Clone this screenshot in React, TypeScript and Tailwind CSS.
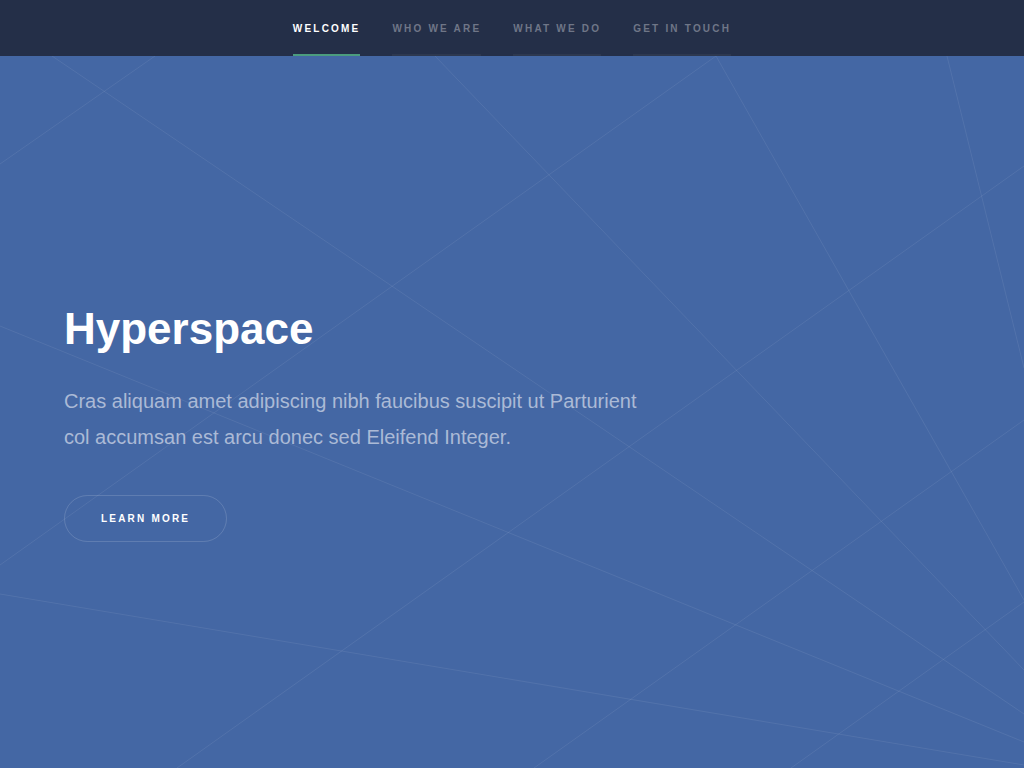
import React from "react";

const lines: [number, number, number, number][] = [
  [52, 0, 1024, 658],
  [155, 0, 0, 108],
  [0, 270, 1024, 686],
  [716, 0, 0, 509],
  [435, 0, 1024, 614],
  [716, 0, 1024, 544],
  [947, 0, 1024, 312],
  [1024, 110, 177, 712],
  [0, 538, 1024, 709],
  [1024, 364, 534, 712],
  [1024, 546, 791, 712],
];

const navItems = ["Welcome", "Who We Are", "What We Do", "Get In Touch"];

export default function App() {
  return (
    <div
      className="flex h-screen w-full flex-col overflow-hidden bg-[#4467a4]"
      style={{ fontFamily: '"Liberation Sans", Arial, sans-serif' }}
    >
      <nav className="flex h-[56px] shrink-0 justify-center gap-[32px] bg-[#242f48]">
        {navItems.map((item, i) => (
          <a
            key={item}
            href="#"
            className={`flex h-full items-center border-b-2 pt-[2px] text-[10px] font-bold uppercase tracking-[0.22em] ${
              i === 0
                ? "border-[#4b9c7e] text-white"
                : "border-[#2d384f] text-[#6f7687]"
            }`}
          >
            {item}
          </a>
        ))}
      </nav>
      <section className="relative flex-1">
        <svg
          className="absolute inset-0 h-full w-full"
          viewBox="0 0 1024 712"
          preserveAspectRatio="none"
          aria-hidden="true"
        >
          {lines.map(([x1, y1, x2, y2], i) => (
            <line
              key={i}
              x1={x1}
              y1={y1}
              x2={x2}
              y2={y2}
              stroke="rgba(255,255,255,0.075)"
              strokeWidth="1"
            />
          ))}
        </svg>
        <div className="relative flex flex-col items-start px-[64px] pt-[240px]">
          <h1 className="text-[44px] font-bold leading-[66px] text-white">
            Hyperspace
          </h1>
          <p className="mt-[22px] w-[590px] text-[20px] leading-[35.6px] text-[#abbad6]">
            Cras aliquam amet adipiscing nibh faucibus suscipit ut Parturient
            col accumsan est arcu donec sed Eleifend Integer.
          </p>
          <a
            href="#"
            className="mt-[40px] flex h-[47px] items-center rounded-full border border-white/15 px-[36px] text-[10px] font-bold uppercase tracking-[0.22em] text-white"
          >
            Learn More
          </a>
        </div>
      </section>
    </div>
  );
}
